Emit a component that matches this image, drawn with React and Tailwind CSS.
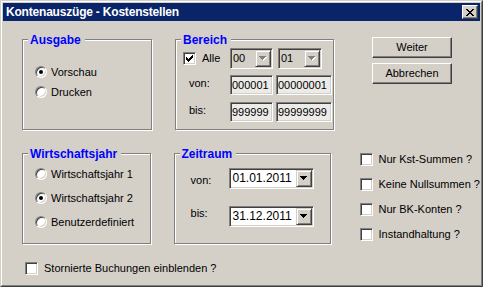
import React from "react";

// classic 3D edges
const sunken =
  "border border-t-[#808080] border-l-[#808080] border-b-white border-r-white shadow-[inset_1px_1px_0_#404040,inset_-1px_-1px_0_#d4d0c8]";
const raised =
  "border border-t-white border-l-white border-b-[#404040] border-r-[#404040] shadow-[inset_-1px_-1px_0_#808080]";
const raisedInner =
  "border border-t-[#d4d0c8] border-l-[#d4d0c8] border-b-[#404040] border-r-[#404040] shadow-[inset_1px_1px_0_#fff,inset_-1px_-1px_0_#808080]";

const Frame = ({ title, className = "", children }) => (
  <div className={`relative border border-[#808080] shadow-[inset_1px_1px_0_#fff,1px_1px_0_#fff] ${className}`}>
    <span className="absolute left-[5px] -top-[7px] bg-[#d4d0c8] pl-[2px] pr-[4px] text-[12px] leading-[14px] font-bold text-[#0000ff]">
      {title}
    </span>
    {children}
  </div>
);

const Radio = ({ checked, label }) => (
  <div className="flex items-center h-[12px]">
    <span className={`flex items-center justify-center w-[12px] h-[12px] rounded-full bg-white ${sunken}`}>
      {checked && <span className="w-[4px] h-[4px] rounded-full bg-black" />}
    </span>
    <span className="ml-[4px] whitespace-nowrap">{label}</span>
  </div>
);

const CheckMark = () => (
  <svg width="7" height="7" viewBox="0 0 7 7" fill="#000">
    <path d="M0 2h1v3H0z M1 3h1v3H1z M2 4h1v3H2z M3 3h1v3H3z M4 2h1v3H4z M5 1h1v3H5z M6 0h1v3H6z" />
  </svg>
);

const Check = ({ checked, label }) => (
  <div className="flex items-center h-[13px]">
    <span className={`flex items-center justify-center shrink-0 w-[13px] h-[13px] bg-white ${sunken}`}>
      {checked && <CheckMark />}
    </span>
    <span className="ml-[6px] whitespace-nowrap">{label}</span>
  </div>
);

const Arrow = ({ disabled }) => (
  <svg width="8" height="5" viewBox="0 0 8 5">
    {disabled && (
      <path fill="#fff" d="M1 1h7v1H1z M2 2h5v1H2z M3 3h3v1H3z M4 4h1v1H4z" />
    )}
    <path
      fill={disabled ? "#808080" : "#000"}
      d="M0 0h7v1H0z M1 1h5v1H1z M2 2h3v1H2z M3 3h1v1H3z"
    />
  </svg>
);

const Combo = ({ value, disabled, className = "", textClass = "" }) => (
  <div className={`flex h-[21px] p-px ${sunken} ${disabled ? "bg-[#d4d0c8]" : "bg-white"} ${className}`}>
    <div className={`flex-1 flex items-center pl-[1px] ${textClass}`}>{value}</div>
    <div className={`w-[16px] flex items-center justify-center bg-[#d4d0c8] ${raisedInner}`}>
      <Arrow disabled={disabled} />
    </div>
  </div>
);

const Field = ({ value, className = "" }) => (
  <div className={`flex items-center h-[20px] pl-[1px] bg-[#ecebe8] ${sunken} ${className}`}>{value}</div>
);

const Button = ({ children }) => (
  <button className={`w-[80px] h-[21px] bg-[#d4d0c8] text-[11px] leading-[13px] ${raised}`}>{children}</button>
);

export default function App() {
  return (
    <div className="w-[483px] h-[287px] bg-[#d4d0c8] border border-t-[#d4d0c8] border-l-[#d4d0c8] border-b-[#404040] border-r-[#404040] font-['Liberation_Sans',Arial,sans-serif] text-[11px] leading-[13px] text-black">
      <div className="h-full p-px border border-t-white border-l-white border-b-[#808080] border-r-[#808080]">
        {/* title bar */}
        <div className="h-[18px] bg-[#0a246a] flex items-center justify-between pl-[3px] pr-[2px]">
          <span className="text-white font-bold text-[12px] leading-[14px] tracking-[-0.2px]">
            Kontenauszüge - Kostenstellen
          </span>
          <div className={`w-[16px] h-[14px] bg-[#d4d0c8] flex items-center justify-center ${raised}`}>
            <svg width="8" height="7" viewBox="0 0 8 7" fill="#000">
              <path d="M0 0h2v1H0z M6 0h2v1H6z M1 1h2v1H1z M5 1h2v1H5z M2 2h4v1H2z M3 3h2v1H3z M2 4h4v1H2z M1 5h2v1H1z M5 5h2v1H5z M0 6h2v1H0z M6 6h2v1H6z" />
            </svg>
          </div>
        </div>

        <div className="pl-[19px] pt-[16px]">
          {/* row 1 */}
          <div className="flex items-start">
            <Frame title="Ausgabe" className="mt-[2px] w-[130px] h-[91px] pl-[12px] pt-[26px] flex flex-col gap-[8px]">
              <Radio checked label="Vorschau" />
              <Radio label="Drucken" />
            </Frame>

            <Frame title="Bereich" className="ml-[23px] mt-[2px] w-[159px] h-[91px] pt-[8px] flex flex-col">
              <div className="flex items-center h-[21px]">
                <div className="w-[54px] pl-[7px]">
                  <Check checked label="Alle" />
                </div>
                <Combo value="00" disabled className="w-[43px]" />
                <Combo value="01" disabled className="w-[44px] ml-[5px]" />
              </div>
              <div className="flex items-start h-[20px] mt-[6px]">
                <div className="w-[54px] pl-[13px] pt-[2px]">von:</div>
                <Field value="000001" className="w-[43px]" />
                <Field value="00000001" className="w-[56px] ml-[3px]" />
              </div>
              <div className="flex items-start h-[20px] mt-[7px]">
                <div className="w-[54px] pl-[13px] pt-[2px]">bis:</div>
                <Field value="999999" className="w-[43px]" />
                <Field value="99999999" className="w-[56px] ml-[3px]" />
              </div>
            </Frame>

            <div className="ml-[38px] flex flex-col gap-[5px]">
              <Button>Weiter</Button>
              <Button>Abbrechen</Button>
            </div>
          </div>

          {/* row 2 */}
          <div className="flex items-start mt-[23px]">
            <Frame title="Wirtschaftsjahr" className="w-[130px] h-[91px] pl-[12px] pt-[14px] flex flex-col gap-[12px]">
              <Radio label="Wirtschaftsjahr 1" />
              <Radio checked label="Wirtschaftsjahr 2" />
              <Radio label="Benutzerdefiniert" />
            </Frame>

            <Frame title="Zeitraum" className="ml-[23px] w-[159px] h-[91px] pt-[14px] flex flex-col">
              <div className="flex items-start">
                <div className="w-[54px] pl-[16px] pt-[6px]">von:</div>
                <Combo value="01.01.2011" className="w-[85px]" textClass="text-[12px] pl-[2px]" />
              </div>
              <div className="flex items-start mt-[17px]">
                <div className="w-[54px] pl-[16px] pt-[1px]">bis:</div>
                <Combo value="31.12.2011" className="w-[85px]" textClass="text-[12px] pl-[2px]" />
              </div>
            </Frame>

            <div className="ml-[29px] flex flex-col gap-[12px]">
              <Check label="Nur Kst-Summen ?" />
              <Check label="Keine Nullsummen ?" />
              <Check label="Nur BK-Konten ?" />
              <Check label="Instandhaltung ?" />
            </div>
          </div>

          {/* row 3 */}
          <div className="mt-[18px] ml-[3px]">
            <Check label="Stornierte Buchungen einblenden ?" />
          </div>
        </div>
      </div>
    </div>
  );
}
